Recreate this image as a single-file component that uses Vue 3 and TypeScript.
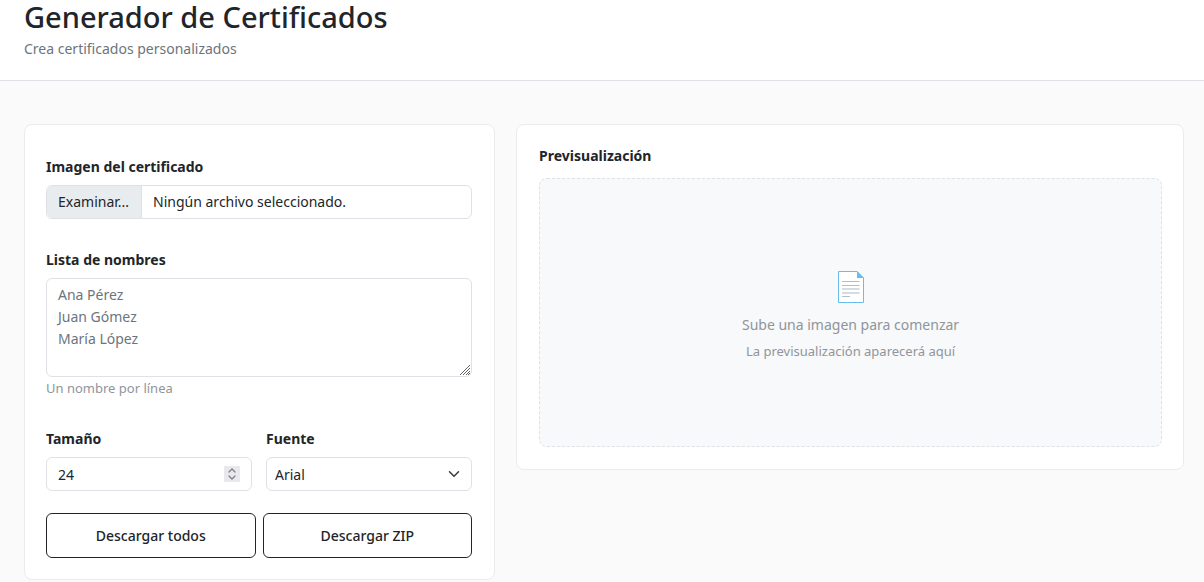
<script setup lang="ts">
import { computed, ref } from 'vue'

const fileName = ref('')
const names = ref('')
const size = ref(24)
const font = ref('Arial')
const fonts: string[] = ['Arial', 'Georgia', 'Verdana', 'Times New Roman']

const fileText = computed(() => fileName.value || 'Ningún archivo seleccionado.')

function onFile(event: Event) {
  const input = event.target as HTMLInputElement
  fileName.value = input.files?.[0]?.name ?? ''
}
</script>

<template>
  <div class="page">
    <header class="header">
      <h1>Generador de Certificados</h1>
      <p>Crea certificados personalizados</p>
    </header>

    <main class="content">
      <form class="card form" @submit.prevent>
        <div class="field">
          <label for="image">Imagen del certificado</label>
          <div class="file">
            <span class="file-button">Examinar...</span>
            <span class="file-name">{{ fileText }}</span>
            <input id="image" type="file" accept="image/*" @change="onFile" />
          </div>
        </div>

        <div class="field">
          <label for="names">Lista de nombres</label>
          <textarea
            id="names"
            v-model="names"
            class="control"
            rows="4"
            aria-describedby="names-hint"
            placeholder="Ana Pérez&#10;Juan Gómez&#10;María López"
          ></textarea>
          <small id="names-hint" class="hint">Un nombre por línea</small>
        </div>

        <div class="pair">
          <div class="field">
            <label for="size">Tamaño</label>
            <div class="number">
              <input id="size" v-model.number="size" class="control" type="number" min="1" />
              <div class="spinner">
                <button type="button" aria-label="Aumentar" @click="size++">
                  <svg viewBox="0 0 16 8"><path d="M5 6 8 3l3 3" /></svg>
                </button>
                <button type="button" aria-label="Reducir" @click="size--">
                  <svg viewBox="0 0 16 8"><path d="M5 2l3 3 3-3" /></svg>
                </button>
              </div>
            </div>
          </div>
          <div class="field">
            <label for="font">Fuente</label>
            <div class="select">
              <select id="font" v-model="font" class="control">
                <option v-for="item in fonts" :key="item">{{ item }}</option>
              </select>
              <svg class="chevron" viewBox="0 0 16 16"><path d="m2 5 6 6 6-6" /></svg>
            </div>
          </div>
        </div>

        <div class="actions">
          <button type="button">Descargar todos</button>
          <button type="button">Descargar ZIP</button>
        </div>
      </form>

      <section class="card preview">
        <h2>Previsualización</h2>
        <div class="empty">
          <svg class="document" viewBox="0 0 26 32" aria-hidden="true">
            <path class="sheet" d="M.5 .5H19L25.500 7V31.500H.5z" />
            <path class="fold" d="M19 0 26 7H19z" />
            <path class="dark" d="M4 10.500h17.500M4 14.500h17.500M4 25.500h8" />
            <path class="light" d="M4 18h17.500M4 22h17.500" />
          </svg>
          <p>Sube una imagen para comenzar</p>
          <small>La previsualización aparecerá aquí</small>
        </div>
      </section>
    </main>
  </div>
</template>

<style>
body {
  margin: 0;
  background: #fafafa;
}
</style>

<style scoped>
* {
  box-sizing: border-box;
}

.page {
  min-height: 100vh;
  background: #fafafa;
  color: #212529;
  font: 14px/22px "Noto Sans", sans-serif;
}

.header {
  padding: 0 24px 20px;
  background: #fff;
  border-bottom: 1px solid #dee2e6;
}

h1,
h2,
p {
  margin: 0;
}

h1 {
  padding-bottom: 4px;
  font-size: 29px;
  font-weight: 500;
  line-height: 34px;
}

.header p {
  color: #6c757d;
}

.content {
  display: grid;
  grid-template-columns: repeat(12, minmax(0, 1fr));
  align-items: start;
  gap: 21px;
  padding: 43px 20px 0 24px;
}

.card {
  background: #fff;
  border: 1px solid #e9ecef;
  border-radius: 8px;
}

.form {
  grid-column: span 5;
  display: flex;
  flex-direction: column;
  gap: 30px;
  padding: 31px 22px 21px 21px;
}

.preview {
  grid-column: span 7;
  padding: 21px 21px 22px 22px;
}

.field {
  display: flex;
  flex-direction: column;
}

.field label {
  margin-bottom: 7px;
  font-weight: 700;
}

.control {
  width: 100%;
  height: 34px;
  margin: 0;
  padding: 5px 11px;
  border: 1px solid #dee2e6;
  border-radius: 6px;
  background: #fff;
  color: inherit;
  font: inherit;
  outline: none;
}

.file {
  position: relative;
  display: flex;
  height: 34px;
  overflow: hidden;
  border: 1px solid #dee2e6;
  border-radius: 6px;
  line-height: 32px;
}

.file-button {
  padding: 0 12px 0 11px;
  background: #e9ecef;
  border-right: 1px solid #dee2e6;
}

.file-name {
  padding: 0 11px;
}

.file input {
  position: absolute;
  inset: 0;
  width: 100%;
  opacity: 0;
}

textarea.control {
  display: block;
  height: 99px;
  resize: vertical;
}

textarea::placeholder {
  color: #6c757d;
}

textarea::-webkit-resizer {
  background: url("data:image/svg+xml,%3Csvg xmlns='http://www.w3.org/2000/svg' viewBox='0 0 15 15'%3E%3Cpath d='M4 14 14 4M7 14l7-7M10 14l4-4M12 14l2-2' stroke='%23666' fill='none'/%3E%3C/svg%3E") center / 15px 15px no-repeat;
}

.hint,
.empty small {
  color: #8f959b;
  font-size: 13px;
}

.hint {
  margin-top: 1px;
  line-height: 20px;
}

.pair {
  display: grid;
  grid-template-columns: 1fr 1fr;
  gap: 14px;
}

.number,
.select {
  position: relative;
}

.number input {
  appearance: textfield;
}

.number input::-webkit-inner-spin-button {
  appearance: none;
}

.spinner {
  position: absolute;
  top: 9px;
  right: 12px;
  display: grid;
  width: 16px;
}

.spinner button {
  display: block;
  height: 8px;
  padding: 0;
  border: 0;
  background: #e9e9ed;
}

.spinner svg {
  display: block;
  width: 16px;
  height: 8px;
  fill: none;
  stroke: #80808c;
  stroke-linecap: round;
  stroke-width: 1.3;
}

select.control {
  appearance: none;
  padding: 2px 32px 0 8px;
}

.chevron {
  position: absolute;
  top: 11px;
  right: 12px;
  width: 12px;
  height: 12px;
  fill: none;
  stroke: #343a40;
  stroke-linecap: round;
  stroke-linejoin: round;
  stroke-width: 2;
  pointer-events: none;
}

.actions {
  display: grid;
  grid-template-columns: 1fr 1fr;
  gap: 7px;
  margin-top: -8px;
}

.actions button {
  height: 45px;
  border: 1px solid #212529;
  border-radius: 6px;
  background: #fff;
  color: inherit;
  font: inherit;
  font-weight: 500;
}

h2 {
  margin-bottom: 12px;
  font-size: 14px;
  font-weight: 700;
  line-height: 20px;
}

.empty {
  display: flex;
  flex-direction: column;
  align-items: center;
  justify-content: center;
  min-height: 269px;
  padding-top: 8px;
  border: 1px dashed #dee2e6;
  border-radius: 8px;
  background: #f8f9fa;
  color: #8f959b;
  text-align: center;
}

.document {
  width: 26px;
  height: 32px;
  margin-bottom: 11px;
}

.sheet {
  fill: #fff;
  stroke: #6bbcee;
}

.fold {
  fill: #6bbcee;
}

.dark {
  fill: none;
  stroke: #adbfc8;
}

.light {
  fill: none;
  stroke: #d4dce1;
  stroke-width: 2;
}

.empty small {
  margin-top: 4px;
}
</style>
